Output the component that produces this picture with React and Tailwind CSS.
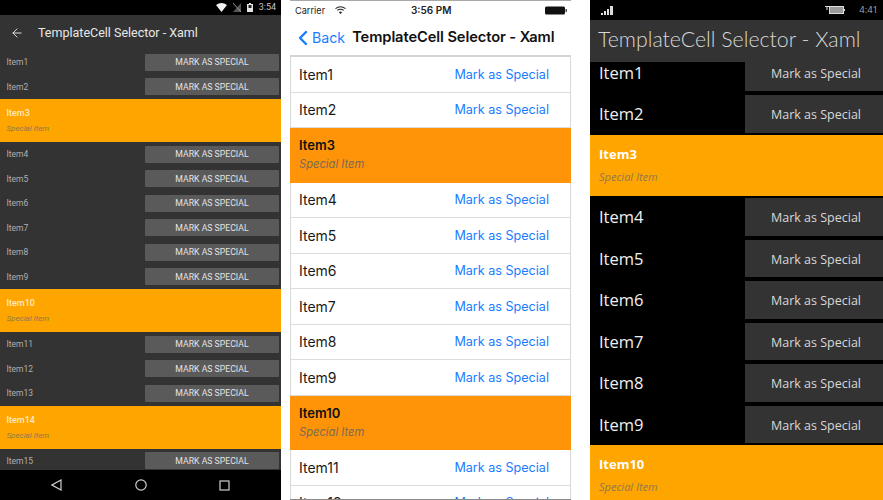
import { ArrowLeft, ChevronLeft } from 'lucide-react';

const androidItems = [
  ['Item1'], ['Item2'], ['Item3', true], ['Item4'], ['Item5'], ['Item6'], ['Item7'], ['Item8'],
  ['Item9'], ['Item10', true], ['Item11'], ['Item12'], ['Item13'], ['Item14', true], ['Item15'],
];
const iosItems = androidItems.slice(0, 12);
const winItems = androidItems.slice(0, 10);

function AndroidPhone() {
  return (
    <div className="w-[281px] h-[500px] shrink-0 flex flex-col bg-[#333333] font-['Roboto',sans-serif]">
      {/* Status bar */}
      <div className="h-[15px] shrink-0 bg-black flex items-center justify-end pr-[5px] gap-[6px] text-[#c4c4c4] text-[9px]">
        <svg width="11" height="9" viewBox="0 0 11 9"><path d="M0 2 Q5.5 -2 11 2 L5.5 9 Z" fill="#f2f2f2" /></svg>
        <svg width="8" height="9" viewBox="0 0 8 9"><path d="M0 9 L8 0 V9 Z" fill="#555" /><path d="M0 0 L8 9" stroke="#999" strokeWidth="1" /></svg>
        <svg width="6" height="9" viewBox="0 0 6 9"><path d="M2 0 H4 V1 H6 V9 H0 V1 H2 Z" fill="#e6e6e6" /><rect x="1.5" y="2" width="3" height="3" fill="#222" /></svg>
        <span className="leading-none">3:54</span>
      </div>
      {/* App bar */}
      <div className="h-[35px] shrink-0 flex items-center text-[#e8e8e8]">
        <ArrowLeft size={14} strokeWidth={1.6} className="ml-[10px]" />
        <span className="ml-[14px] pt-[1px] text-[12.5px]">TemplateCell Selector - Xaml</span>
      </div>
      {/* List */}
      <div className="flex-1 min-h-0 overflow-hidden">
        {androidItems.map(([name, special]) =>
          special ? (
            <div key={name} className="h-[43px] bg-[#ffa500] pl-[6.5px] pt-[10px] leading-none">
              <div className="text-[9px] font-medium text-[#ffe9c4]">{name}</div>
              <div className="mt-[7px] text-[8px] italic text-[#8f7a50]">Special Item</div>
            </div>
          ) : (
            <div key={name} className="h-[24.5px] flex items-center justify-between pl-[6.5px] pr-[2px]">
              <span className="pt-[1px] text-[8.5px] text-[#b0b0b0]">{name}</span>
              <div className="w-[134px] h-[17px] bg-[#5a5a5a] rounded-[1px] flex items-center justify-center pt-[1px] text-[8.7px] text-[#e4e4e4]">
                MARK AS SPECIAL
              </div>
            </div>
          )
        )}
      </div>
      {/* Nav bar */}
      <div className="h-[30px] shrink-0 bg-black flex items-center">
        <svg className="ml-[51px]" width="11" height="12" viewBox="0 0 11 12" fill="none" stroke="#d0d0d0" strokeWidth="1.2"><path d="M10 1 L1 6 L10 11 Z" /></svg>
        <svg className="ml-[73px]" width="12" height="12" viewBox="0 0 12 12" fill="none" stroke="#d0d0d0" strokeWidth="1.2"><circle cx="6" cy="6" r="5.2" /></svg>
        <svg className="ml-[72px]" width="11" height="11" viewBox="0 0 11 11" fill="none" stroke="#d0d0d0" strokeWidth="1.2"><rect x="1" y="1" width="9" height="9" /></svg>
      </div>
    </div>
  );
}

function IosPhone() {
  return (
    <div className="w-[281px] h-[500px] shrink-0 flex flex-col bg-white border-b border-b-[#8a8a8a] font-['Inter',sans-serif]">
      {/* Status bar */}
      <div className="h-[20px] shrink-0 border-t border-[#a8a8a8] relative flex items-center justify-between pl-[5px] pr-[4px] text-[9.2px] text-[#222]">
        <div className="flex items-center gap-[10px]">
          <span>Carrier</span>
          <svg width="11" height="8" viewBox="0 0 11 8" fill="none" stroke="#222" strokeWidth="1.1">
            <path d="M0.5 2.6 Q5.5 -1 10.5 2.6" />
            <path d="M2.3 4.4 Q5.5 2 8.7 4.4" />
            <path d="M5.5 8 L3.9 6.2 Q5.5 5 7.1 6.2 Z" fill="#222" stroke="none" />
          </svg>
        </div>
        <span className="absolute left-[121px] text-[10px] font-semibold">3:56 PM</span>
        <svg width="22" height="9" viewBox="0 0 22 9"><rect x="0" y="0.5" width="20" height="8" rx="1.5" fill="#111" /><rect x="20.5" y="3" width="1.5" height="3" fill="#555" /></svg>
      </div>
      {/* Nav bar */}
      <div className="h-[37px] shrink-0 flex items-center border-b-[2px] border-[#d4d4d4]">
        <ChevronLeft size={24} strokeWidth={2.4} className="text-[#1a7cff] ml-[1px] -mr-[3px]" />
        <span className="text-[14.2px] text-[#1a7cff]">Back</span>
        <span className="ml-[7px] text-[14.7px] font-semibold text-[#111] whitespace-nowrap tracking-[-0.1px]">TemplateCell Selector - Xaml</span>
      </div>
      {/* List */}
      <div className="flex-1 min-h-0 overflow-hidden">
        {iosItems.map(([name, special]) =>
          special ? (
            <div key={name} className="h-[54.5px] bg-[#ff9409] pl-[9px] pt-[11px] leading-none">
              <div className="text-[13px] font-semibold text-[#111]">{name}</div>
              <div className="mt-[7px] text-[11.2px] italic text-[#7c6b52]">Special Item</div>
            </div>
          ) : (
            <div key={name} className="h-[35.5px] flex items-center justify-between pl-[8px] pr-[21px] border-x border-x-[#d8d8d8] border-b border-b-[#dcdcdc]">
              <span className="text-[14px] text-[#1a1a1a]">{name}</span>
              <span className="pt-[2px] text-[12.6px] text-[#1a7cff]">Mark as Special</span>
            </div>
          )
        )}
      </div>
    </div>
  );
}

function WinPhone() {
  return (
    <div className="w-[293px] h-[500px] shrink-0 flex flex-col bg-black font-['Open_Sans',sans-serif]">
      {/* Status bar */}
      <div className="h-[20px] shrink-0 flex items-center pl-[11px] pr-[5px] text-[#a8a8a8]">
        <svg width="13" height="10" viewBox="0 0 13 10" fill="#dcdcdc">
          <rect x="0" y="8" width="2" height="2" /><rect x="3" y="6" width="2" height="4" /><rect x="6" y="4" width="2" height="6" /><rect x="9" y="1" width="3" height="9" />
        </svg>
        <svg className="ml-auto" width="20" height="10" viewBox="0 0 20 10">
          <rect x="4.5" y="1.5" width="14" height="7" fill="#999" stroke="#ddd" /><rect x="19" y="4" width="1" height="2" fill="#ddd" /><path d="M0 1.5 H4 M2 1 V5" stroke="#ddd" />
        </svg>
        <span className="ml-[14px] text-[9.5px]">4:41</span>
      </div>
      {/* Title bar */}
      <div className="h-[42px] shrink-0 bg-[#333333] flex items-center pl-[8px] pb-[2px] font-['Lato',sans-serif] text-[21.3px] font-light text-[#d8d8d8] whitespace-nowrap">
        TemplateCell Selector - Xaml
      </div>
      {/* List, scrolled a little under the title bar */}
      <div className="flex-1 min-h-0 overflow-hidden">
        <div className="-mt-[10.5px]">
          {winItems.map(([name, special]) =>
            special ? (
              <div key={name} className="h-[61.5px] bg-[#ffa500] pl-[9px] pt-[13px] leading-none">
                <div className="text-[13px] font-bold text-white">{name}</div>
                <div className="mt-[10px] text-[11px] italic text-[#8f7a50]">Special Item</div>
              </div>
            ) : (
              <div key={name} className="h-[41.5px] flex items-center justify-between pl-[9px]">
                <span className="pt-[2px] text-[16.5px] text-[#f0f0f0]">{name}</span>
                <div className="w-[138px] h-[37.5px] bg-[#333333] flex items-center justify-center pl-[4px] pt-[4px] text-[12.5px] text-[#d8d8d8]">
                  Mark as Special
                </div>
              </div>
            )
          )}
        </div>
      </div>
    </div>
  );
}

export default function App() {
  return (
    <div className="w-[883px] h-[500px] overflow-hidden bg-white flex">
      <AndroidPhone />
      <div className="w-[9px] shrink-0" />
      <IosPhone />
      <div className="w-[19px] shrink-0" />
      <WinPhone />
    </div>
  );
}
